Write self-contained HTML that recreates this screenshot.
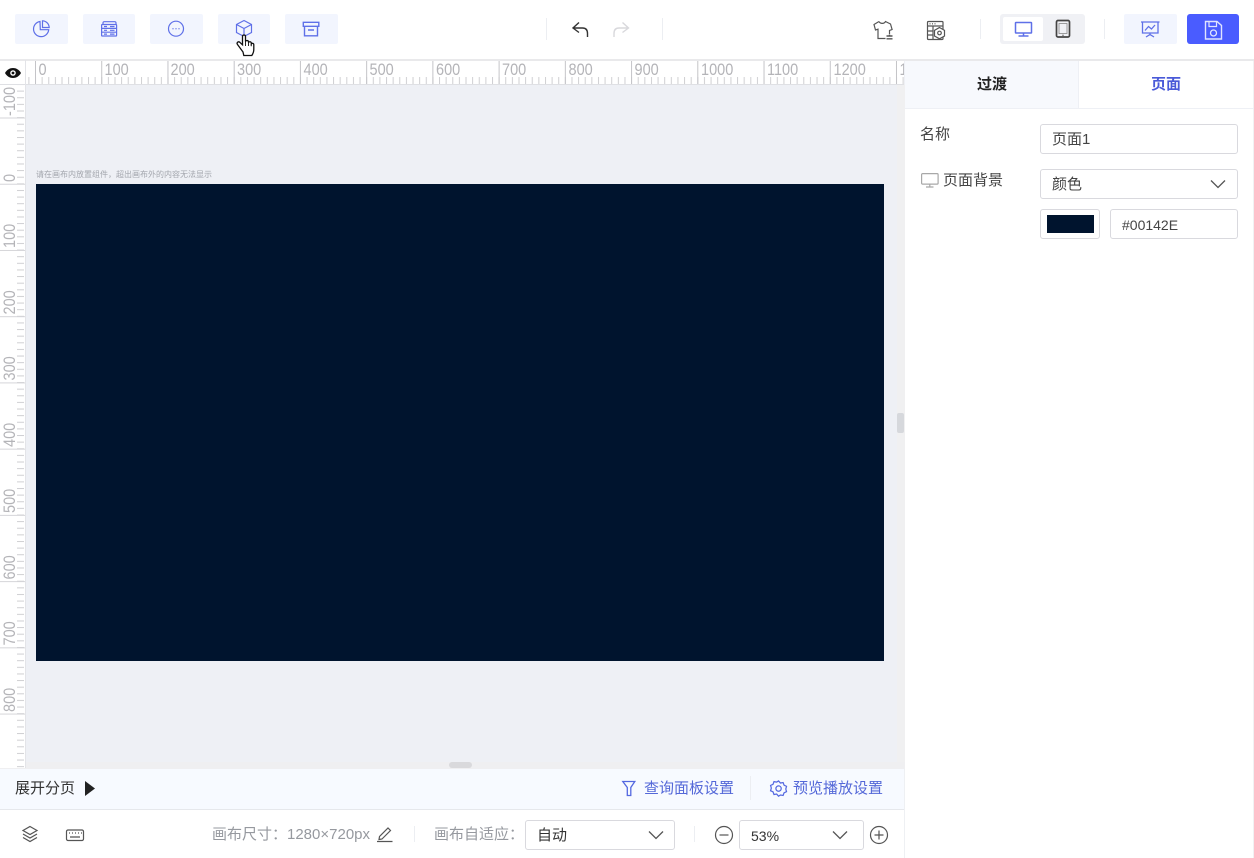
<!DOCTYPE html>
<html lang="zh"><head><meta charset="utf-8"><title>页面</title>
<style>
html,body{margin:0;padding:0;width:1254px;height:858px;overflow:hidden;background:#fff;font-family:"Liberation Sans","Noto Sans CJK SC",sans-serif;font-size:15px;color:#333}
.a{position:absolute;box-sizing:border-box}
.btn{position:absolute;top:14px;height:30px;background:#f2f5fe;border-radius:2px}
.dv{position:absolute;width:1px;background:#eceef2}
.inp{position:absolute;background:#fff;border:1px solid #d9d9de;border-radius:3px;box-sizing:border-box;color:#444;line-height:30px;padding-left:11px}
.t{position:absolute;white-space:nowrap;line-height:20px}
svg.i{position:absolute;overflow:visible;fill:none}
</style></head><body>

<div class="a" style="left:0;top:0;width:1254px;height:61px;background:#fff;border-bottom:2px solid #e9e9eb"></div>
<div class="btn" style="left:15px;width:53px"></div>
<div class="btn" style="left:83px;width:52px"></div>
<div class="btn" style="left:150px;width:53px"></div>
<div class="btn" style="left:218px;width:52px"></div>
<div class="btn" style="left:285px;width:53px"></div>

<svg class="i" style="left:0;top:0" width="350" height="60" stroke="#5f70e8" stroke-width="1.200">
<path d="M40 21.500A7.600 7.600 0 1 0 48.700 29.700H40.300Z"/><path d="M42.500 20.800A7 7 0 0 1 49.200 27.500H42.500Z"/>
<path d="M103 24.500v-1.500c0-.8.5-1.300 1.300-1.300h10.400c.8 0 1.300.5 1.300 1.300v1.500"/><rect x="101.600" y="24.500" width="15" height="11.500" rx=".8"/><path d="M101.600 28.400h15M101.600 32.200h15M104 26.500h3M104 30.300h3M104 34.100h3M110 26.500h4.500M110 30.300h4.500M110 34.100h4.500"/>
<circle cx="176" cy="28.700" r="7.500"/><path d="M172.500 28.700h1M175.500 28.700h1M178.500 28.700h1" stroke-width="1.400"/>
<path d="M244 20.500l7.500 4v8l-7.500 4-7.500-4v-8ZM236.500 24.500l7.500 4 7.500-4M244 28.500v8"/>
<path d="M303.300 22.300h15.500v4h-15.500ZM304.500 26.300v9.500h13v-9.500M308 30h6" stroke-width="1.400"/>
</svg>
<!-- hand cursor -->
<svg class="i" style="left:1px;top:0" width="350" height="60">
<path d="M242 52l-5.500-7.500c-1.300-1.800.8-3.500 2.300-2.200l2.700 2.500V36.500c0-2 3-2 3 0v5c.5-1.400 2.800-1.400 3 .3v.7c.6-1.200 2.700-1 2.800.6v.8c.7-1 2.500-.7 2.500.9v4.700c0 2.500-1 4.500-2 6h-8Z" fill="#fff" stroke="#111" stroke-width="1.300"/>
<path d="M244.500 41.500v4.500M247.500 42.500v3.500M250.300 43.900v2.300" stroke="#111" stroke-width=".9"/>
</svg>

<div class="dv" style="left:546px;top:18px;height:22px"></div>
<div class="dv" style="left:662px;top:18px;height:22px"></div>
<svg class="i" style="left:570px;top:18px" width="60" height="22" stroke-width="1.400" stroke="#333">
<path d="M9 4.500L3 10l6 4.500M3 10H12.500c3.500 0 5 2 5 5.500V19"/>
<path d="M52.500 4.500l6 5.500-6 4.500M58.500 10H49c-3.500 0-5 2-5 5.500V19" stroke="#d8d8dc"/>
</svg>

<svg class="i" style="left:870px;top:16px" width="80" height="28" stroke="#555" stroke-width="1.200">
<path d="M9 5.500L4 8.500l1.500 5.500 2.500-.8v9.300h7.500M9 5.500c1.200 2.500 5.300 2.500 6.500 0L20.500 8l1.600 5.500-2.600 1v3.500"/><path d="M16.500 20h6M16.500 22.800h6M19.500 18.500v1.500" stroke-width="1.400"/>
<rect x="57.500" y="5.500" width="15.500" height="18" rx="1"/><path d="M57.500 10h15.500M63 10v13.500M57.500 15h5.500M57.500 19h5.500M59.500 7.800h1M62 7.800h1M64.500 7.800h1"/>
<path d="M69.500 11.500l5 2.800v5.700l-5 2.800-5-2.800v-5.700Z" fill="#fff"/><circle cx="69.500" cy="17" r="1.800"/>
</svg>
<div class="dv" style="left:980px;top:19px;height:20px"></div>

<div class="a" style="left:1000px;top:14px;width:85px;height:30px;background:#f0f1f5;border-radius:3px"></div>
<div class="a" style="left:1003px;top:17px;width:40px;height:24px;background:#fff;border-radius:2px"></div>
<svg class="i" style="left:1000px;top:14px" width="85" height="30" stroke-width="1.300">
<rect x="15.500" y="8.500" width="16" height="10.500" rx=".5" stroke="#5f70e8" stroke-width="1.500"/><path d="M23.500 19v3M18.500 22h10" stroke="#5f70e8" stroke-width="1.500"/>
<rect x="56.500" y="6.500" width="13" height="16.500" rx="1.500" stroke="#444" stroke-width="1.700"/><rect x="59" y="9.500" width="8" height="10" stroke="#888" stroke-width=".8"/><path d="M62.500 21.300h1" stroke="#444"/>
</svg>
<div class="dv" style="left:1104px;top:19px;height:20px"></div>

<div class="btn" style="left:1124px;width:53px"></div>
<div class="btn" style="left:1187px;width:52px;background:#4a5cff;border-radius:3px"></div>
<svg class="i" style="left:1120px;top:10px" width="125" height="40" stroke-width="1.200" stroke="#5f70e8">
<path d="M21 12h18.500M22.500 12v11h15.500V12M30 23v2.500M26 27l4-2.500 4 2.500M25 20.500l3.500-4 3 2.500 3.500-4" stroke-width="1.300"/>
<path d="M85.500 11.500h11.500l4.500 4v13.500h-16Z" stroke="#e0e4ff" stroke-width="1.400"/><path d="M89 11.500v5h7.500v-5" stroke="#e0e4ff"/><circle cx="93.500" cy="23" r="3" stroke="#e0e4ff" stroke-width="1.300"/>
</svg>

<!-- canvas -->
<div class="a" style="left:0;top:61px;width:905px;height:708px;background:#eef0f5"></div>
<div class="a" style="left:897px;top:84px;width:8px;height:685px;background:#f0f0f1"></div>
<div class="a" style="left:897px;top:413px;width:7px;height:20px;background:#d6d8dc;border-radius:2px"></div>
<div class="a" style="left:0;top:762px;width:905px;height:7px;background:#efeff1"></div>
<div class="a" style="left:449px;top:762px;width:23px;height:6px;background:#d9d9dc;border-radius:3px"></div>
<div class="a" style="left:36px;top:184px;width:848px;height:477px;background:#00142e"></div>
<div class="t" style="left:36px;top:165px;font-size:8px;color:#a3a6ad">请在画布内放置组件，超出画布外的内容无法显示</div>

<!-- rulers -->
<svg class="i" style="left:0;top:60px;overflow:hidden" width="904" height="708">
<defs>
<pattern id="hs" x="1.900" y="0" width="6.623" height="24" patternUnits="userSpaceOnUse"><rect x="0" y="17" width="1" height="7" fill="#cfcfd2"/></pattern>
<pattern id="hl" x="35" y="0" width="66.230" height="24" patternUnits="userSpaceOnUse"><rect x="0" y="0" width="1" height="24" fill="#c4c4c8"/></pattern>
<pattern id="vs" x="0" y="24" width="25" height="6.623" patternUnits="userSpaceOnUse"><rect x="17" y="0" width="7" height="1" fill="#cfcfd2"/></pattern>
<pattern id="vl" x="0" y="57.500" width="25" height="66.230" patternUnits="userSpaceOnUse"><rect x="0" y="0" width="25" height="1" fill="#d5d5d9"/></pattern>
</defs>
<rect x="0" y="1" width="904" height="23" fill="#fff"/>
<rect x="26" y="1" width="878" height="23" fill="url(#hs)"/>
<rect x="26" y="1" width="878" height="23" fill="url(#hl)"/>
<rect x="0" y="24" width="904" height="1" fill="#dfe0e4"/>
<rect x="0" y="25" width="25" height="683" fill="#fff"/>
<rect x="0" y="25" width="25" height="683" fill="url(#vs)"/>
<rect x="0" y="25" width="25" height="683" fill="url(#vl)"/>
<rect x="25" y="0" width="1" height="708" fill="#e3e4e8"/>
<g font-family="Liberation Sans" font-size="16.5" fill="#b4b4b8">
<text transform="translate(38.500,15) scale(.88,1)">0</text><text transform="translate(104.500,15) scale(.88,1)">100</text><text transform="translate(170.500,15) scale(.88,1)">200</text><text transform="translate(237,15) scale(.88,1)">300</text><text transform="translate(303.500,15) scale(.88,1)">400</text><text transform="translate(369.500,15) scale(.88,1)">500</text><text transform="translate(436,15) scale(.88,1)">600</text><text transform="translate(502,15) scale(.88,1)">700</text><text transform="translate(568.500,15) scale(.88,1)">800</text><text transform="translate(634.500,15) scale(.88,1)">900</text><text transform="translate(701,15) scale(.88,1)">1000</text><text transform="translate(767,15) scale(.88,1)">1100</text><text transform="translate(833.500,15) scale(.88,1)">1200</text><text transform="translate(899.500,15) scale(.88,1)">1300</text>
<text transform="translate(15,56) rotate(-90) scale(.88,1)">-100</text>
<text transform="translate(15,122) rotate(-90) scale(.88,1)">0</text>
<text transform="translate(15,188) rotate(-90) scale(.88,1)">100</text>
<text transform="translate(15,254.500) rotate(-90) scale(.88,1)">200</text>
<text transform="translate(15,320.500) rotate(-90) scale(.88,1)">300</text>
<text transform="translate(15,387) rotate(-90) scale(.88,1)">400</text>
<text transform="translate(15,453) rotate(-90) scale(.88,1)">500</text>
<text transform="translate(15,519.500) rotate(-90) scale(.88,1)">600</text>
<text transform="translate(15,585.500) rotate(-90) scale(.88,1)">700</text>
<text transform="translate(15,652) rotate(-90) scale(.88,1)">800</text>
</g>
<rect x="0" y="1" width="25" height="23" fill="#fff"/>
<path d="M5 13c2-3.500 5-5 8-5s6 1.500 8 5c-2 3.500-5 5-8 5s-6-1.500-8-5Z" fill="#111"/>
<circle cx="13" cy="13" r="2.800" fill="#fff"/><circle cx="13" cy="13" r="1.400" fill="#111"/>
</svg>

<!-- right panel -->
<div class="a" style="left:905px;top:61px;width:349px;height:797px;background:#fff;border-right:1px solid #f1f1f3"></div>
<div class="a" style="left:905px;top:61px;width:174px;height:48px;background:#f7f9fd;border-right:1px solid #eef0f5"></div>
<div class="a" style="left:905px;top:108px;width:349px;height:1px;background:#eef0f5"></div>
<div class="t" style="left:977px;top:75px;font-weight:700;color:#222">过渡</div>
<div class="t" style="left:1151px;top:75px;font-weight:700;color:#4a5ad8">页面</div>
<div class="t" style="left:920px;top:125px;color:#444">名称</div>
<svg class="i" style="left:921px;top:172px" width="18" height="16" stroke="#a8a8a8" stroke-width="1.200"><rect x=".6" y="1.600" width="16.500" height="10.500" rx="1"/><path d="M8.800 12v3M5 15h7.500"/></svg>
<div class="t" style="left:943px;top:171px;color:#444">页面背景</div>
<div class="inp" style="left:1040px;top:124px;width:198px;height:30px">页面1</div>
<div class="inp" style="left:1040px;top:169px;width:198px;height:30px">颜色</div>
<svg class="i" style="left:1210px;top:179px" width="16" height="10" stroke="#555" stroke-width="1.300"><path d="M1 1.500l7 7 7-7"/></svg>
<div class="inp" style="left:1040px;top:209px;width:60px;height:30px"></div>
<div class="a" style="left:1047px;top:215px;width:47px;height:18px;background:#00142e"></div>
<div class="inp" style="left:1110px;top:209px;width:128px;height:30px;font-size:14px">#00142E</div>

<!-- footer -->
<div class="a" style="left:0;top:769px;width:905px;height:41px;background:#f7faff;border-bottom:1px solid #e6e8ec"></div>
<div class="a" style="left:0;top:810px;width:905px;height:48px;background:#fff"></div>
<div class="a" style="left:904px;top:769px;width:1px;height:89px;background:#eef0f3"></div>
<div class="t" style="left:15px;top:779px;color:#333">展开分页</div>
<svg class="i" style="left:85px;top:781px" width="10" height="16"><path d="M0 0l10 7.500L0 15Z" fill="#222"/></svg>
<svg class="i" style="left:620px;top:779px" width="18" height="18" stroke="#5468e0" stroke-width="1.300"><path d="M2.800 2.500h12L10.800 8.500v8h-3.500v-8Z"/></svg>
<div class="t" style="left:644px;top:779px;color:#5468d8">查询面板设置</div>
<div class="dv" style="left:750px;top:776px;height:24px"></div>
<svg class="i" style="left:769.500px;top:780px" width="17" height="17" stroke="#5468e0" stroke-width="1.300"><g transform="scale(.95)"><path d="M9 1l2 2.200 2.800-.5 1 2.800 2.600 1.200-.8 2.800.8 2.800-2.600 1.200-1 2.800-2.800-.5L9 17l-2-2.200-2.800.5-1-2.800L.6 11.300l.8-2.800-.8-2.800 2.600-1.200 1-2.800 2.800.5Z"/><circle cx="9" cy="9" r="2.800"/></g></svg>
<div class="t" style="left:793px;top:779px;color:#5468d8">预览播放设置</div>

<svg class="i" style="left:20px;top:825px" width="70" height="20" stroke="#555" stroke-width="1.200">
<path d="M10 1.500l7 4-7 4-7-4ZM3 9l7 4 7-4M3 12.500l7 4 7-4"/>
<rect x="46.500" y="5" width="17" height="10.500" rx="1.500"/><path d="M49 8h1M52 8h1M55 8h1M58 8h1M61 8h1M50 12h10"/>
</svg>
<div class="t" style="left:212px;top:825px;color:#96999f">画布尺寸：1280×720px</div>
<svg class="i" style="left:376px;top:825px" width="18" height="18" stroke="#555" stroke-width="1.200"><path d="M3.500 11.500L12 3l2.500 2.500-8.500 8.500-3 .5ZM1 16.500h15.500"/></svg>
<div class="dv" style="left:414px;top:826px;height:16px"></div>
<div class="t" style="left:434px;top:825px;color:#96999f">画布自适应：</div>
<div class="inp" style="left:525px;top:820px;width:150px;height:30px;color:#333">自动</div>
<svg class="i" style="left:648px;top:830px" width="16" height="10" stroke="#555" stroke-width="1.300"><path d="M1 1.500l7 7 7-7"/></svg>
<div class="dv" style="left:694px;top:826px;height:16px"></div>
<svg class="i" style="left:714px;top:825px" width="20" height="20" stroke="#555" stroke-width="1.200"><circle cx="10" cy="10" r="8.500"/><path d="M5.500 10h9"/></svg>
<div class="inp" style="left:739px;top:820px;width:125px;height:30px;color:#333;font-size:14px">53%</div>
<svg class="i" style="left:832px;top:830px" width="16" height="10" stroke="#555" stroke-width="1.300"><path d="M1 1.500l7 7 7-7"/></svg>
<svg class="i" style="left:869px;top:825px" width="20" height="20" stroke="#555" stroke-width="1.200"><circle cx="10" cy="10" r="8.500"/><path d="M5.500 10h9M10 5.500v9"/></svg>
</body></html>
